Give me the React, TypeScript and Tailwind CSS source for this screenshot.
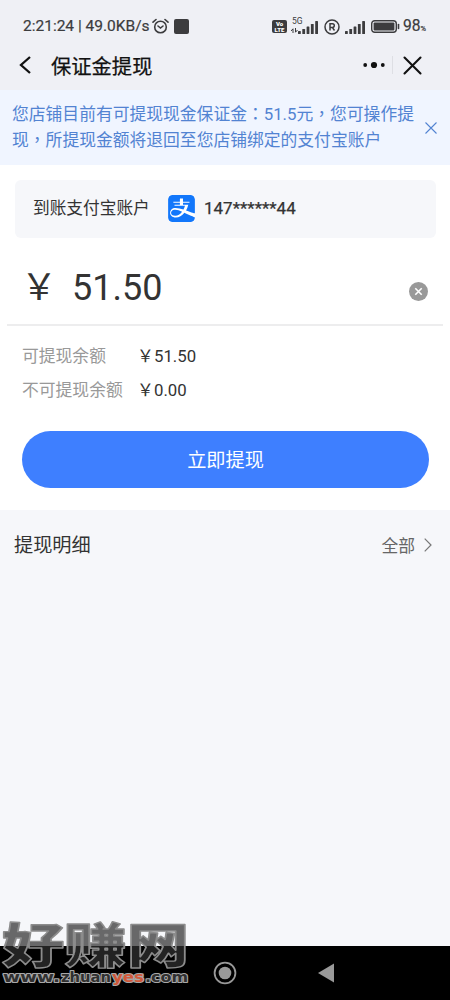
import type { ReactNode } from "react";
import { SiAlipay } from "react-icons/si";

function Signal() {
    return (
        <svg width="21" height="13" viewBox="0 0 21 13" fill="#3c3c3e">
            <rect x="0" y="10" width="2.8" height="3" rx="0.6" />
            <rect x="4.3" y="8" width="2.8" height="5" rx="0.6" />
            <rect x="8.6" y="5.5" width="2.8" height="7.5" rx="0.6" />
            <rect x="12.9" y="3" width="2.8" height="10" rx="0.6" />
            <rect x="17.2" y="0" width="2.8" height="13" rx="0.6" />
        </svg>
    );
}

function StatusBar() {
    return (
        <div className="flex h-[42px] items-center pt-[11px] pl-[23px] text-[#3c3c3e]">
            <span className="w-[127px] pt-px text-[15.5px] whitespace-nowrap [-webkit-text-stroke:0.2px]">2:21:24 | 49.0KB/s</span>
            <svg className="ml-[2px]" width="17" height="17" viewBox="0 0 17 17" fill="none" stroke="#3c3c3e" strokeWidth="1.6" strokeLinecap="round">
                <circle cx="8.5" cy="9" r="5.8" />
                <path d="M1 4.2 4 1.5M16 4.2 13 1.5M6 8l2.5 2L11 8" />
            </svg>
            <div className="ml-[5px] size-[15px] rounded-[2px] bg-[#3c3c3e]" />
            <div className="ml-[83px] flex h-[13px] w-[15px] flex-col items-center justify-center rounded-[2px] bg-[#3c3c3e] text-[6px] leading-[5.5px] font-black text-white">
                <span>Vo</span>
                <span>LTE</span>
            </div>
            <div className="relative ml-[4px] flex h-[15px] w-[28px] items-end justify-end">
                <span className="absolute -top-[2px] left-[1px] text-[8.5px] leading-[9px]">5G</span>
                <svg className="mb-[1px]" width="7" height="5" viewBox="0 0 7 5" stroke="#3c3c3e" fill="none">
                    <path d="M2 5V.8L0 3M4.5 0v4.2L6.5 2" />
                </svg>
                <Signal />
            </div>
            <svg className="ml-[5px]" width="16" height="16" viewBox="0 0 16 16" fill="none" stroke="#3c3c3e" strokeWidth="1.5">
                <circle cx="8" cy="8" r="7" />
                <path d="M6 11.5V4.8h2.5a1.8 1.8 0 0 1 0 3.6H6M8.3 8.4l2.2 3.1" />
            </svg>
            <div className="ml-[5px] flex h-[15px] items-end">
                <Signal />
            </div>
            <svg className="ml-[5px]" width="29" height="13" viewBox="0 0 29 13" fill="none">
                <rect x=".7" y=".7" width="24.6" height="11.6" rx="3" stroke="#3c3c3e" strokeWidth="1.4" />
                <rect x="2.6" y="2.6" width="20.8" height="7.8" rx="1" fill="#3c3c3e" />
                <path d="M27.5 4.5v4" stroke="#3c3c3e" strokeWidth="1.6" strokeLinecap="round" />
            </svg>
            <span className="ml-[3px] pt-px text-[15.6px] [-webkit-text-stroke:0.2px]">98</span>
            <span className="mt-[5px] text-[7.5px] [-webkit-text-stroke:0.2px]">%</span>
        </div>
    );
}

function NavBar() {
    return (
        <div className="flex h-12 items-center pb-[2px] pl-[18px]">
            <svg width="14" height="18" viewBox="0 0 14 18" fill="none" stroke="#111" strokeWidth="2.3">
                <path d="M12 1 3 9l9 8" />
            </svg>
            <h1 className="ml-[19px] pt-[4px] text-[20.3px] text-[#111] [-webkit-text-stroke:0.25px]">保证金提现</h1>
            <svg className="ml-auto" width="24" height="8" viewBox="0 0 24 8" fill="#111">
                <circle cx="3.2" cy="4" r="1.9" />
                <circle cx="12" cy="4" r="3.1" />
                <circle cx="20.8" cy="4" r="1.9" />
            </svg>
            <div className="ml-[6px] h-[18px] w-px bg-[#dedfe4]" />
            <svg className="mr-[28px] ml-[10px]" width="19" height="19" viewBox="0 0 19 19" stroke="#111" strokeWidth="2.1" strokeLinecap="round">
                <path d="m1.5 1.5 16 16m0-16-16 16" />
            </svg>
        </div>
    );
}

// full-width punctuation sits in the middle of its cell
function Mark({ children }: { children: ReactNode }) {
    return <span lang="zh-TW" className="font-['Noto_Sans_CJK_TC',sans-serif]">{children}</span>;
}

function Notice() {
    return (
        <div className="flex h-[75px] items-center bg-[#f0f5ff] pl-3">
            <p className="w-[410px] pb-px text-[16.8px] leading-[25px] whitespace-nowrap text-[#5283d2]">
                您店铺目前有可提现现金保证金<Mark>：</Mark>51.5元<Mark>，</Mark>您可操作提
                <br />
                现<Mark>，</Mark>所提现金额将退回至您店铺绑定的支付宝账户
            </p>
            <svg className="ml-[3px]" width="12" height="12" viewBox="0 0 12 12" stroke="#5283d2" strokeWidth="1.1">
                <path d="m.5.5 11 11m0-11-11 11" />
            </svg>
        </div>
    );
}

function Balance({ label, value }: { label: string; value: string }) {
    return (
        <div className="flex h-[33.5px] items-center text-[16.8px]">
            <span className="w-[115px] text-[#999]">{label}</span>
            <span className="flex text-[#333]">
                <span className="w-[17px]">￥</span>
                {value}
            </span>
        </div>
    );
}

function Withdraw() {
    return (
        <div className="flex h-[345px] flex-col bg-white pt-[15px]">
            <div className="mr-[14px] ml-[15px] flex h-[58px] items-center rounded-md bg-[#f6f7fa] pl-[18px] text-[16.7px] text-[#333]">
                <span className="w-[135px]">到账支付宝账户</span>
                <div className="mb-[2px] size-[27px] overflow-hidden rounded-[4px] bg-white">
                    <SiAlipay size={27} color="#1277fb" />
                </div>
                <span className="ml-[9px] text-[17px] [-webkit-text-stroke:0.25px]">147******44</span>
            </div>
            <div className="mx-[7px] flex h-[88px] items-center border-b-2 border-[#ededee] pt-[12px] pl-[14px] text-[#333]">
                <span className="w-[51px] pt-px text-[36px] leading-10">￥</span>
                <span className="pt-[2px] text-[36px] leading-10">51.50</span>
                <svg className="mt-[9px] mr-[15px] ml-auto" width="19" height="19" viewBox="0 0 19 19">
                    <circle cx="9.5" cy="9.5" r="9.5" fill="#999" />
                    <path d="m6.3 6.3 6.4 6.4m0-6.4-6.4 6.4" stroke="#fff" strokeWidth="1.6" />
                </svg>
            </div>
            <div className="mt-[14px] ml-[22px]">
                <Balance label="可提现余额" value="51.50" />
                <Balance label="不可提现余额" value="0.00" />
            </div>
            <button className="mt-[24px] mr-[21px] ml-[22px] h-[57px] rounded-full bg-[#3e7fff] pt-[3px] text-[19.2px] text-white">
                立即提现
            </button>
        </div>
    );
}

function Details() {
    return (
        <div className="flex h-[70px] items-center pr-[18px] pl-[14px]">
            <h2 className="pt-[3px] text-[19.2px] text-[#333]">提现明细</h2>
            <span className="ml-auto pt-[3px] text-[16.8px] text-[#666]">全部</span>
            <svg className="ml-[9px]" width="8" height="14" viewBox="0 0 8 14" fill="none" stroke="#777" strokeWidth="1.2">
                <path d="m.7.7 6.3 6.3-6.3 6.3" />
            </svg>
        </div>
    );
}

function Watermark() {
    return (
        <svg className="absolute bottom-0 left-0" width="200" height="110" viewBox="0 0 200 110" strokeLinejoin="round">
            <text
                x="2" y="73" textLength="187" lengthAdjust="spacingAndGlyphs" fontSize="48" fontWeight="900"
                fill="#303030" fillOpacity="0.72" stroke="#8c8c8c" strokeWidth="1.4"
                className="font-['Noto_Sans_CJK_SC',sans-serif]"
            >
                好赚网
            </text>
            <g fontSize="14.5" fontWeight="700" fill="#303030" stroke="#a8a8a8" strokeWidth="2.2" paintOrder="stroke" fontFamily="DejaVu Sans, sans-serif">
                <text x="3" y="92" textLength="57" lengthAdjust="spacingAndGlyphs">www.</text>
                <text x="61" y="92" textLength="50" lengthAdjust="spacingAndGlyphs">zhuan</text>
                <text x="112" y="92" textLength="32" lengthAdjust="spacingAndGlyphs" fill="#d0583a">yes</text>
                <text x="145" y="92" textLength="43" lengthAdjust="spacingAndGlyphs">.com</text>
            </g>
        </svg>
    );
}

export default function App() {
    return (
        <div lang="zh-CN" className="relative flex h-[1000px] w-[450px] flex-col overflow-hidden bg-[#f6f7fa] font-[Roboto,'Noto_Sans_CJK_SC',sans-serif]">
            <header className="h-[90px] bg-[#eff0f5]">
                <StatusBar />
                <NavBar />
            </header>
            <Notice />
            <Withdraw />
            <Details />
            <footer className="mt-auto flex h-[54px] items-center bg-black pl-[213px]">
                <svg width="24" height="24" viewBox="0 0 24 24" fill="#999">
                    <circle cx="12" cy="12" r="10.4" fill="none" stroke="#999" strokeWidth="1.8" />
                    <circle cx="12" cy="12" r="6.3" />
                </svg>
                <svg className="ml-[81px]" width="16" height="20" viewBox="0 0 16 20" fill="#999">
                    <path d="M16 .5v19L0 10Z" />
                </svg>
            </footer>
            <Watermark />
        </div>
    );
}
